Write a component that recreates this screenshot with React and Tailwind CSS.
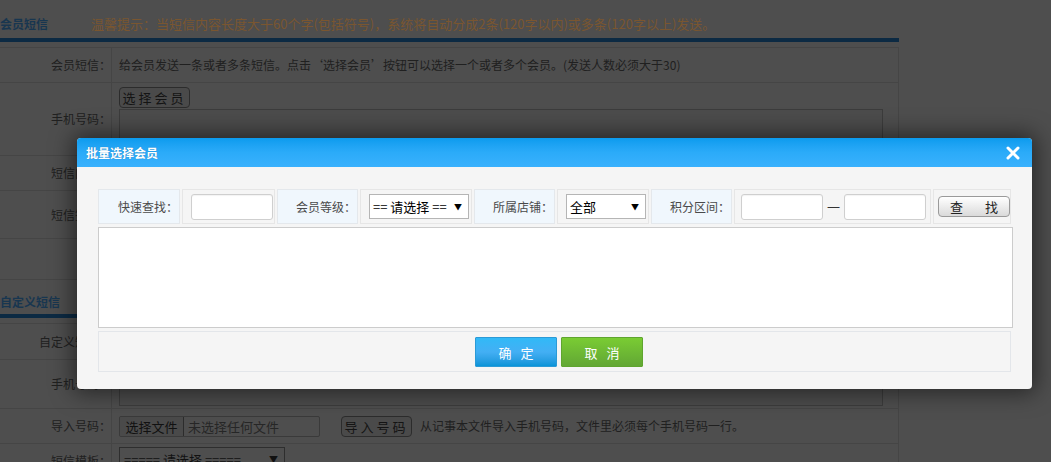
import React from "react";

const LINE = "border-[#454545]";

function Label({ children }) {
  return (
    <div className={`w-[112px] shrink-0 border-r ${LINE} flex items-center justify-end pr-0 text-[12px] text-[#202020]`}>
      {children}
    </div>
  );
}

function Row({ h, label, children, contentClass = "items-center" }) {
  return (
    <div className={`flex border-b ${LINE} ${h}`}>
      <Label>{label}</Label>
      <div className={`flex-1 flex pl-[7px] ${contentClass}`}>{children}</div>
    </div>
  );
}

function DimButton({ children, w }) {
  return (
    <div className={`${w} h-[21px] shrink-0 flex items-center justify-center rounded-[4px] border border-[#2c2c2c] bg-[#4a4a4a] text-[13px] text-[#141414] tracking-[3px] leading-none`}>
      {children}
    </div>
  );
}

function Page() {
  return (
    <div className="w-[899px]">
      {/* section 1 */}
      <div className="h-[38px] pt-[10px] flex items-center">
        <div className="w-[91px] text-[12px] font-bold text-[#183650]">会员短信</div>
        <div className="text-[13px] text-[#7a5630] whitespace-nowrap">
          温馨提示：当短信内容长度大于60个字(包括符号)，系统将自动分成2条(120字以内)或多条(120字以上)发送。
        </div>
      </div>
      <div className="h-[4px] bg-[#0c2a43]" />
      <div className={`mt-[5px] border-t border-r ${LINE}`}>
        <Row h="h-[35px]" label="会员短信：">
          <span className="text-[12px] text-[#202020] whitespace-nowrap">
            给会员发送一条或者多条短信。点击‘选择会员’按钮可以选择一个或者多个会员。(发送人数必须大于30)
          </span>
        </Row>
        <Row h="h-[73px]" label="手机号码：" contentClass="flex-col pt-[4px]">
          <DimButton w="w-[71px]">选择会员</DimButton>
          <div className="mt-[1px] w-[764px] h-[44px] border border-[#3c3c3c] bg-[#4c4c4c]" />
        </Row>
        <Row h="h-[35px]" label="短信内容：" />
        <Row h="h-[48px]" label="短信签名：" />
        <Row h="h-[41px]" label="" />
      </div>

      {/* section 2 */}
      <div className="h-[34px] pt-[10px] flex items-center">
        <div className="text-[12px] font-bold text-[#183650]">自定义短信</div>
      </div>
      <div className="h-[4px] bg-[#0c2a43]" />
      <div className={`mt-[5px] border-t border-r ${LINE}`}>
        <Row h="h-[36px]" label="自定义短信：" />
        <Row h="h-[49px]" label="手机号码：" contentClass="flex-col pt-[2px]">
          <div className="w-[764px] h-[44px] border border-[#3c3c3c] bg-[#4c4c4c]" />
        </Row>
        <Row h="h-[35px]" label="导入号码：">
          <div className="w-[201px] h-[21px] flex items-center rounded-[2px] border border-[#3a3a3a] text-[13px] leading-none">
            <div className="w-[64px] h-full flex items-center justify-center border-r border-[#2c2c2c] bg-[#4a4a4a] text-[#111] rounded-l-[2px]">
              选择文件
            </div>
            <span className="pl-[4px] text-[#262626]">未选择任何文件</span>
          </div>
          <div className="ml-[21px]">
            <DimButton w="w-[71px]">导入号码</DimButton>
          </div>
          <span className="ml-[8px] text-[12px] text-[#202020] whitespace-nowrap">
            从记事本文件导入手机号码，文件里必须每个手机号码一行。
          </span>
        </Row>
        <Row h="h-[35px]" label="短信模板：" contentClass="items-start pt-[3px]">
          <div className="w-[166px] h-[24px] flex items-center justify-between pl-[4px] pr-[6px] border border-[#2e2e2e] text-[13px] text-[#111] leading-none">
            <span>===== 请选择 =====</span>
            <span className="text-[9px]">▼</span>
          </div>
        </Row>
      </div>
    </div>
  );
}

function LabelCell({ w, children }) {
  return (
    <div className={`${w} h-full shrink-0 border border-[#e4e8ec] bg-[#f0f7fd] flex items-center justify-end pr-[1px] text-[12px] text-[#4a4a4a]`}>
      {children}
    </div>
  );
}

function FieldCell({ w, pl = "pl-[8px]", children }) {
  return (
    <div className={`${w} h-full shrink-0 border border-[#e6e6e6] bg-[#f5f5f5] flex items-center ${pl}`}>
      {children}
    </div>
  );
}

function TextInput() {
  return <div className="w-[82px] h-[26px] rounded-[3px] border border-[#cfcfcf] bg-white shadow-[inset_0_1px_1px_rgba(0,0,0,0.05)]" />;
}

function Select({ w, text }) {
  return (
    <div className={`${w} h-[25px] flex items-center justify-between pl-[3px] pr-[6px] border border-[#b5b5b5] bg-white text-[13px] text-black leading-none`}>
      <span>{text}</span>
      <span className="text-[8px]">▼</span>
    </div>
  );
}

function Modal() {
  return (
    <div className="absolute left-[77px] top-[138px] w-[955px] h-[251px] rounded-[4px] bg-[#f5f5f5] shadow-[0_0_22px_4px_rgba(0,0,0,0.5)] overflow-hidden flex flex-col">
      <div className="h-[29px] shrink-0 bg-gradient-to-b from-[#0a9bee] via-[#2babf9] to-[#39b1fd] flex items-center justify-between pl-[9px] pr-[12px]">
        <span className="text-white font-bold text-[12px] [text-shadow:0_0_1px_rgba(0,40,80,0.4)]">批量选择会员</span>
        <svg width="14" height="14" viewBox="0 0 14 14">
          <path d="M2 2 L12 12 M12 2 L2 12" stroke="#fff" strokeWidth="3" strokeLinecap="round" />
        </svg>
      </div>
      <div className="pt-[22px] pl-[21px]">
        <div className="w-[913px] h-[35px] flex gap-[2px]">
          <LabelCell w="w-[82px]">快速查找：</LabelCell>
          <FieldCell w="w-[93px]">
            <TextInput />
          </FieldCell>
          <LabelCell w="w-[81px]">会员等级：</LabelCell>
          <FieldCell w="w-[112px]">
            <Select w="w-[100px]" text="== 请选择 ==" />
          </FieldCell>
          <LabelCell w="w-[81px]">所属店铺：</LabelCell>
          <FieldCell w="w-[92px]">
            <Select w="w-[80px]" text="全部" />
          </FieldCell>
          <LabelCell w="w-[81px]">积分区间：</LabelCell>
          <FieldCell w="w-[197px]" pl="pl-[6px]">
            <TextInput />
            <span className="w-[21px] text-center text-[13px] text-[#333]">一</span>
            <TextInput />
          </FieldCell>
          <div className="w-[78px] h-full shrink-0 border border-[#e6e6e6] bg-[#f5f5f5] flex items-center pl-[4px]">
            <div className="w-[72px] h-[21px] rounded-[4px] border border-[#9a9a9a] bg-gradient-to-b from-white to-[#dadada] flex items-center justify-center gap-[22px] text-[13px] text-[#222] leading-none">
              <span>查</span>
              <span>找</span>
            </div>
          </div>
        </div>
        <div className="mt-[3px] w-[915px] h-[101px] border border-[#cccccc] bg-white" />
        <div className="mt-[3px] w-[913px] h-[41px] border border-[#e3e6ea] bg-[#f5f5f5] flex justify-center gap-[4px] pl-[9px] pt-[5px]">
          <div className="w-[82px] h-[30px] rounded-[1px] border border-[#2b9ad6] bg-gradient-to-b from-[#30b9f7] via-[#43aff4] to-[#0794d8] flex items-center justify-center gap-[9px] text-[13px] text-white leading-none">
            <span>确</span>
            <span>定</span>
          </div>
          <div className="w-[82px] h-[30px] rounded-[1px] border border-[#5fa52f] bg-gradient-to-b from-[#7acc33] to-[#62a734] flex items-center justify-center gap-[9px] text-[13px] text-white leading-none">
            <span>取</span>
            <span>消</span>
          </div>
        </div>
      </div>
    </div>
  );
}

export default function App() {
  return (
    <div className="relative w-[1051px] h-[462px] overflow-hidden bg-[#4e4e4e] font-['Noto_Sans_CJK_SC','Noto_Sans',sans-serif] text-[12px]">
      <Page />
      <Modal />
    </div>
  );
}
